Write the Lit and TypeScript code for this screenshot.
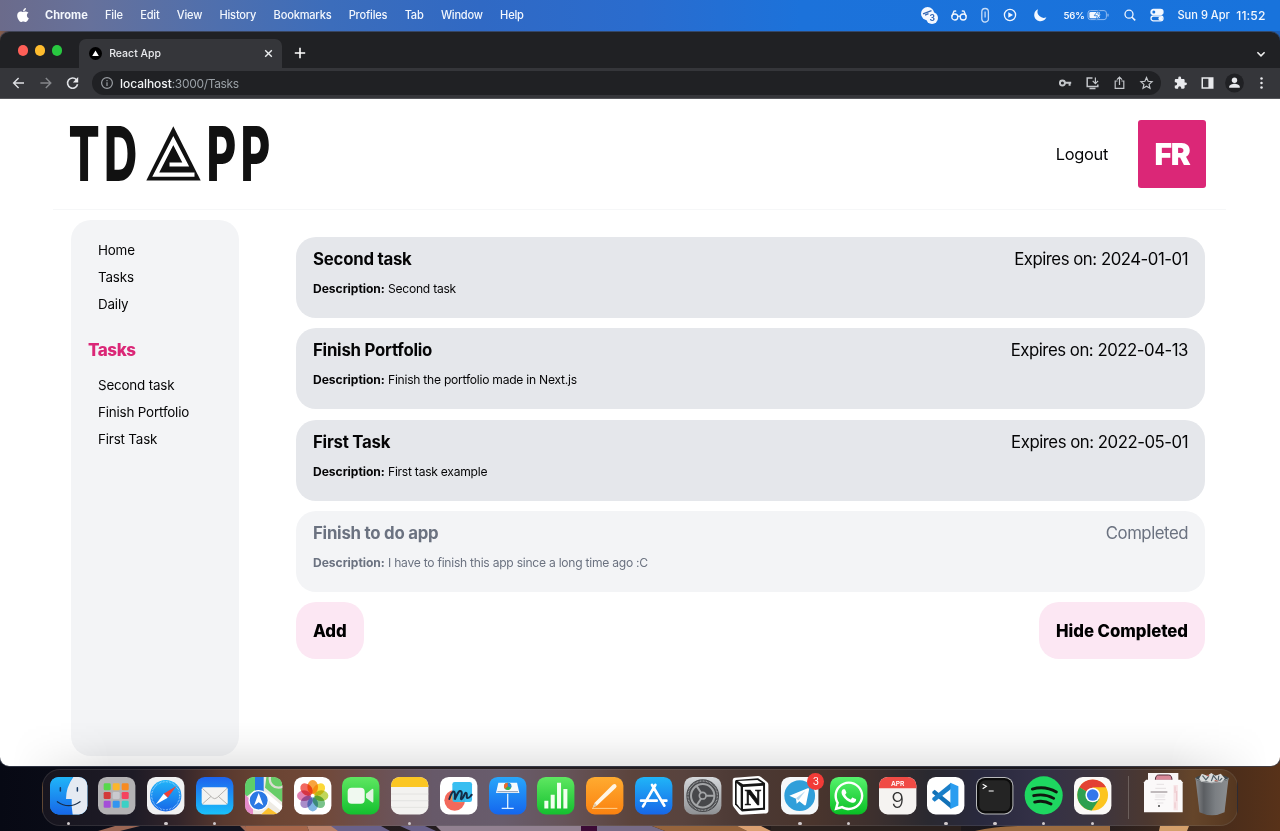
import { LitElement, html, css, svg } from "lit";
import { customElement } from "lit/decorators.js";

const tile = (fill: string) => svg`<rect width="112" height="112" rx="26" fill=${fill}/>`;

@customElement("menu-bar")
class MenuBar extends LitElement {
  static styles = css`
    :host { display: flex; align-items: center; height: 31px; color: #f3f7fd; font-size: 11.05px; letter-spacing: -.07px; font-weight: 500;
      background: linear-gradient(90deg, #6b6b8b 0, #66719b 90px, #4e6fae 220px, #3c6dbb 330px, #3069c4 480px, #2a6cce 640px, #1c72da 800px, #1873dc 100%); }
    .apple { width: 12px; height: 14px; margin: 0 16.5px 2px 16.5px; flex: none; fill: #fff; }
    .menus { display: flex; gap: 17.3px; margin-top: -1px; white-space: nowrap; letter-spacing: -.18px; }
    .name { font-weight: 700; letter-spacing: 0; }
    .status { display: flex; align-items: center; margin: -1px 0 0 auto; padding-right: 14.5px; white-space: nowrap; }
    .ic { width: 18px; height: 18px; flex: none; fill: none; stroke: #f1f6fe; stroke-width: 1.3; overflow: visible; }
    .solid { fill: #f4f8ff; stroke: none; }
    .glasses { margin-left: 12.5px; } .clip { margin-left: 8px; opacity: .8; } .play { margin-left: 7px; } .moon { margin-left: 12px; }
    .pct { font-size: 9.5px; font-weight: 600; letter-spacing: -.1px; margin-left: 14px; width: 24px; }
    .bat { width: 22px; }
    .search { margin-left: 12px; } .cc { margin-left: 9px; }
    .date { margin-left: 11px; font-size: 11.1px; letter-spacing: 0; }
    .time { margin-left: 6.5px; font-size: 12.1px; letter-spacing: .1px; }
  `;
  render() {
    return html`
      <svg class="apple" viewBox="0 30 384 452"><path d="M318.7 268.7c-.2-36.7 16.4-64.4 50-84.8-18.8-26.9-47.2-41.7-84.7-44.6-35.5-2.8-74.3 20.7-88.5 20.7-15 0-49.4-19.7-76.4-19.7C63.3 141.2 4 184.8 4 273.5q0 39.3 14.4 81.2c12.8 36.7 59 126.7 107.2 125.2 25.2-.6 43-17.9 75.8-17.9 31.8 0 48.3 17.9 76.4 17.9 48.6-.7 90.4-82.5 102.6-119.3-65.2-30.7-61.7-90-61.7-91.9zm-56.6-164.2c27.3-32.4 24.8-61.9 24-72.5-24.1 1.4-52 16.4-67.9 34.9-17.5 19.8-27.8 44.3-25.6 71.9 26.1 2 49.9-11.4 69.5-34.3z"/></svg>
      <div class="menus"><span class="name">Chrome</span>${["File", "Edit", "View", "History", "Bookmarks", "Profiles", "Tab", "Window", "Help"].map((m) => html`<span>${m}</span>`)}</div>
      <div class="status">
        <svg class="ic" viewBox="0 0 18 18"><g class="solid"><circle cx="7.6" cy="7.6" r="6.6"/><circle cx="12" cy="12" r="6"/></g><path d="M3 7.8 11.5 4.6M5 9.2 8.5 7.6" stroke="#3467b4"/><text x="9.5" y="15.2" font-size="8.5" font-weight="700" fill="#2f67b8" stroke="none">3</text></svg>
        <svg class="ic glasses" viewBox="0 0 18 18"><circle cx="4.8" cy="11" r="3"/><circle cx="13.2" cy="11" r="3"/><path d="M7.8 10.6Q9 9.6 10.2 10.6M1.8 10.6 4 5.2 6.2 5M16.2 10.6 14 5.2 11.8 5"/></svg>
        <svg class="ic clip" viewBox="0 0 18 18"><path d="M5.8 13.2V5.8a3.3 3.3 0 0 1 6.6 0v6.4a3.3 3.3 0 0 1-6.6 1M9.1 5.5v6"/></svg>
        <svg class="ic play" viewBox="0 0 18 18"><circle cx="9" cy="9" r="5.6"/><path class="solid" d="M7.3 6.2v5.6L12 9z"/></svg>
        <svg class="ic moon" viewBox="0 0 18 18"><path class="solid" d="M7 3.2A6.3 6.3 0 1 0 15.4 11.2 6.2 6.2 0 0 1 7 3.2z"/></svg>
        <span class="pct">56%</span>
        <svg class="ic bat" viewBox="0 0 22 18"><rect x="1" y="4.6" width="18.4" height="9" rx="2.4" stroke="#8fb9f0" stroke-width="1"/><rect class="solid" x="2.4" y="6" width="10.5" height="6.2" rx="1.2"/><path d="M21 7.8v2.6" stroke="#8fb9f0"/><path d="M12.2 3.2 7.2 9.7h3.2l-1.6 5.2 5.4-6.8h-3.4z" fill="#fff" stroke="#1873dc" stroke-width=".8"/></svg>
        <svg class="ic search" viewBox="0 0 18 18"><circle cx="8" cy="8.2" r="4"/><path d="m11 11.2 3.2 3.2" stroke-width="1.6"/></svg>
        <svg class="ic cc" viewBox="0 0 18 18"><rect x="3" y="3.4" width="12" height="5" rx="2.5" fill="#f4f8ff"/><rect x="3" y="10" width="12" height="4.8" rx="2.4"/><circle cx="5.8" cy="5.9" r="1.5" fill="#1873dc" stroke="none"/><circle class="solid" cx="12.4" cy="12.4" r="2"/></svg>
        <span class="date">Sun 9 Apr</span><span class="time">11:52</span>
      </div>`;
  }
}

@customElement("browser-chrome")
class BrowserChrome extends LitElement {
  static styles = css`
    :host { display: block; color: #e9eaed; }
    .tabs { display: flex; align-items: flex-end; height: 36px; background: #202124; }
    .lights { display: flex; gap: 6.6px; padding: 0 16.5px 12.5px 17.5px; }
    .dot { width: 10.5px; height: 10.5px; border-radius: 50%; }
    .red { background: #fe5f57; } .yel { background: #febc2e; } .grn { background: #28c840; }
    .tab { display: flex; align-items: center; box-sizing: border-box; width: 203px; height: 29px; padding: 0 8px 0 10.5px; border-radius: 7px 7px 0 0; background: #35363a; font-size: 10.5px; font-weight: 500; }
    .fav { width: 13px; height: 13px; margin-right: 7px; }
    .close { width: 11px; height: 11px; margin-left: auto; stroke: #eceef0; stroke-width: 1.4; fill: none; }
    .plus { width: 12px; height: 12px; margin: 0 0 9px 12.5px; stroke: #fff; stroke-width: 1.6; }
    .chev { width: 10px; height: 10px; margin: 0 14px 9.5px auto; stroke: #eee; stroke-width: 1.6; fill: none; }
    .bar { display: flex; align-items: center; box-sizing: border-box; height: 31px; padding: 0 5.5px 0 5px; background: #35363a; border-bottom: 1px solid #55565a; }
    .i { width: 27px; height: 18px; flex: none; fill: none; stroke: #dfe1e5; stroke-width: 1.4; overflow: visible; }
    .dim { stroke: #85878b; }
    .omni { display: flex; align-items: center; flex: 1; height: 24px; margin: 0 6px 0 6px; border-radius: 12px; background: #202124; font-size: 12px; letter-spacing: -.33px; color: #9aa0a6; }
    .info { width: 14px; height: 14px; margin: 0 6px 0 8px; fill: none; stroke: #9b9fa4; stroke-width: 1.2; }
    .host { color: #f1f3f4; font-weight: 500; letter-spacing: -.05px; }
    .small { stroke: #c3c6ca; stroke-width: 1.2; }
    .end { display: flex; margin: 0 .8px 0 auto; }
    .f { fill: #e9eaed; stroke: none; }
  `;
  render() {
    return html`
      <div class="tabs">
        <div class="lights"><i class="dot red"></i><i class="dot yel"></i><i class="dot grn"></i></div>
        <div class="tab"><svg class="fav" viewBox="0 0 13 13"><circle cx="6.5" cy="6.5" r="6.5" fill="#000"/><path d="M6.5 3.4 9.8 9H3.2z" fill="#fff"/></svg>React App<svg class="close" viewBox="0 0 11 11"><path d="m2.2 2.2 6.6 6.6m0-6.6L2.2 8.8"/></svg></div>
        <svg class="plus" viewBox="0 0 12 12"><path d="M6 .8v10.4M.8 6h10.4"/></svg>
        <svg class="chev" viewBox="0 0 10 10"><path d="m1.4 3.2 3.6 3.6 3.6-3.6"/></svg>
      </div>
      <div class="bar">
        <svg class="i" viewBox="0 0 27 18"><path d="M19 9H8.6m5-5-5 5 5 5"/></svg>
        <svg class="i dim" viewBox="0 0 27 18"><path d="M8.4 9h10.4m-5-5 5 5-5 5"/></svg>
        <svg class="i" viewBox="0 0 27 18"><path d="M17.4 5.6A5.1 5.1 0 1 0 18.6 10.3" stroke-width="1.6"/><path class="f" d="M19.2 3v5.4h-5.4z"/></svg>
        <div class="omni">
          <svg class="info" viewBox="0 0 14 14"><circle cx="7" cy="7" r="5.4"/><path d="M7 6.3v3.6M7 3.9v1.3"/></svg><span><span class="host">localhost</span>:3000/Tasks</span>
          <div class="end">
            <svg class="i small" viewBox="0 0 27 18"><circle cx="10.4" cy="9" r="2.5" stroke-width="1.9"/><path d="M13 8.8h6.2M17.6 9v2.8" stroke-width="2"/></svg>
            <svg class="i small" viewBox="0 0 27 18"><path d="M13.5 4H8.2v8.6h10.6v-2.2M10.5 14.4h6" stroke-width="1.5"/><path d="M16.4 3.4v6m-2.7-2.6 2.7 2.8 2.7-2.8"/></svg>
            <svg class="i small" viewBox="0 0 27 18"><path d="M11.6 7H9.2v7.4h8.6V7h-2.4M13.5 11V3.2m-2.6 2.4 2.6-2.6 2.6 2.6"/></svg>
            <svg class="i small" viewBox="0 0 27 18"><path d="m13.5 3.6 1.6 3.7 4 .4-3 2.7.9 3.9-3.5-2.1-3.5 2.1.9-3.9-3-2.7 4-.4z"/></svg>
          </div>
        </div>
        <svg class="i" viewBox="0 0 27 18"><path class="f" transform="translate(6.6 2) scale(.58)" d="M20.5 11H19V7c0-1.1-.9-2-2-2h-4V3.5a2.5 2.5 0 0 0-5 0V5H4c-1.1 0-1.99.9-1.99 2v3.8H3.5a2.7 2.7 0 0 1 0 5.4H2V20c0 1.1.9 2 2 2h3.8v-1.5a2.7 2.7 0 0 1 5.4 0V22H17c1.1 0 2-.9 2-2v-4h1.5a2.5 2.5 0 0 0 0-5z"/></svg>
        <svg class="i" viewBox="0 0 27 18"><path class="f" fill-rule="evenodd" d="M7.5 3.2h12v11.6h-12zM9 4.7v8.6h5.4V4.7z"/></svg>
        <svg class="i" viewBox="0 0 27 18"><circle cx="13.5" cy="9" r="9.4" fill="#202124" stroke="none"/><circle class="f" cx="13.5" cy="6.3" r="2.7"/><path class="f" d="M8.2 13.8v-1c0-2 3.4-3 5.3-3s5.3 1 5.3 3v1z"/></svg>
        <svg class="i" viewBox="0 0 27 18"><g class="f"><circle cx="13.5" cy="4.6" r="1.25"/><circle cx="13.5" cy="9" r="1.25"/><circle cx="13.5" cy="13.4" r="1.25"/></g></svg>
      </div>`;
  }
}

interface Task { title: string; text: string; status: string; done?: boolean }

const tasks: Task[] = [
  { title: "Second task", text: "Second task", status: "Expires on: 2024-01-01" },
  { title: "Finish Portfolio", text: "Finish the portfolio made in Next.js", status: "Expires on: 2022-04-13" },
  { title: "First Task", text: "First task example", status: "Expires on: 2022-05-01" },
  { title: "Finish to do app", text: "I have to finish this app since a long time ago :C", status: "Completed", done: true },
];

@customElement("tasks-page")
class TasksPage extends LitElement {
  static styles = css`
    :host { display: flex; flex-direction: column; flex: 1; min-height: 0; color: #050506; background: #fff; }
    header { display: flex; align-items: center; box-sizing: border-box; height: 110.8px; margin: 0 54px 0 53px; padding-right: 20px; border-bottom: 1px solid #f6f7f8; }
    .logo { width: 204px; height: 60px; margin-left: 15px; fill: #111; overflow: visible; font-family: Inter, sans-serif; font-weight: 800; letter-spacing: 7px; }
    .logout { margin-left: auto; font-size: 16.4px; letter-spacing: -.3px; }
    .avatar { display: grid; place-items: center; width: 68px; height: 68px; margin-left: 30px; border-radius: 3px; background: #db2777; color: #fff; font-size: 30px; font-weight: 900; letter-spacing: -1.2px; }
    .body { display: flex; flex: 1; min-height: 0; padding: 10px 75px 10px 71px; }
    aside { box-sizing: border-box; width: 168px; padding: 17px 17px; border-radius: 20px; background: #f3f4f6; }
    .link { padding-left: 10px; height: 27.1px; line-height: 27.8px; font-size: 13.4px; letter-spacing: -.18px; }
    h2 { margin: 16px 0 7px; height: 31px; line-height: 33px; font-size: 17px; font-weight: 800; letter-spacing: -.45px; color: #db2777; }
    main { flex: 1; padding: 17px 0 0 57px; }
    .card { box-sizing: border-box; height: 81px; margin-bottom: 10.4px; padding: 9.2px 17px; border-radius: 20px; background: #e5e7eb; }
    .done { background: #f3f4f6; color: #6b7280; }
    .top { display: flex; justify-content: space-between; line-height: 26px; font-size: 16.8px; letter-spacing: -.48px; }
    .title { font-weight: 700; letter-spacing: -.24px; }
    .desc { margin-top: 7px; line-height: 20px; font-size: 12.1px; letter-spacing: -.25px; }
    .desc b { letter-spacing: -.05px; }
    .actions { display: flex; justify-content: space-between; }
    .btn { height: 57px; padding: 0 17px; border: 0; border-radius: 20px; background: #fce7f3; color: #000; font: 800 16.8px Inter, sans-serif; letter-spacing: -.06px; }
  `;
  render() {
    return html`
      <header>
        <svg class="logo" viewBox="0 0 204 60" font-size="76">
          <text x=".5" y="56.500" textLength="73" lengthAdjust="spacingAndGlyphs">TD</text>
          <text x="138.500" y="56.500" textLength="68" lengthAdjust="spacingAndGlyphs">PP</text>
          <path d="M105.300 2.200 132.700 56.500H78.300z"/>
          <path d="M126.500 50.700H87.700L105.300 16.600 117.700 40.500H101.500" fill="none" stroke="#fff" stroke-width="4.200"/>
        </svg>
        <span class="logout">Logout</span>
        <div class="avatar">FR</div>
      </header>
      <div class="body">
        <aside>
          ${["Home", "Tasks", "Daily"].map((l) => html`<div class="link">${l}</div>`)}
          <h2>Tasks</h2>
          ${tasks.filter((t) => !t.done).map((t) => html`<div class="link">${t.title}</div>`)}
        </aside>
        <main>
          ${tasks.map((t) => html`<div class="card ${t.done ? "done" : ""}"><div class="top"><span class="title">${t.title}</span><span>${t.status}</span></div><div class="desc"><b>Description:</b> ${t.text}</div></div>`)}
          <div class="actions"><button class="btn">Add</button><button class="btn">Hide Completed</button></div>
        </main>
      </div>`;
  }
}

const petals = ["#f7941d", "#fcd116", "#b5cf3a", "#62b875", "#69a8dd", "#9a79c0", "#dc6ba4", "#f04e45"];

const apps = [
  { run: true, art: svg`${tile("#1d9bf5")}<path d="M0 60V26A26 26 0 0 1 26 0h40Q48 32 47 64h19q-2 26 2 48H26A26 26 0 0 1 0 86z" fill="url(#blue)"/><path d="M70 0h16a26 26 0 0 1 26 26v60a26 26 0 0 1-26 26H68q-4-22-3-46H48Q48 30 70 0z" fill="#e5eaf2"/><path d="M31 32v10M82 32v10" stroke="#173a66" stroke-width="4.5" stroke-linecap="round"/><path d="M22 74q34 24 68 0" stroke="#172c48" stroke-width="3.5" fill="none" stroke-linecap="round"/>` },
  { run: false, art: svg`${tile("#b3b2b4")}${["#57d84b", "#fbb62b", "#f78a22", "#d23a3a", "#c9c9ce", "#f4435f", "#a44fd8", "#3295f0", "#3bd0c5"].map((c, i) => svg`<rect x=${17 + (i % 3) * 27} y=${19 + Math.floor(i / 3) * 26} width="21" height="21" rx="4" fill=${c}/>`)}` },
  { run: true, art: svg`${tile("#f1f1f2")}<circle cx="56" cy="56" r="47" fill="url(#blue)"/><circle cx="56" cy="56" r="42" fill="none" stroke="#b9e0ff" stroke-width="4" stroke-dasharray="1.5 3"/><path d="M88 27 50 50 62 62z" fill="#ee4238"/><path d="M26 82 50 50 62 62z" fill="#fff"/>` },
  { run: true, art: svg`${tile("url(#mail)")}<rect x="17" y="31" width="78" height="52" rx="6" fill="#f4f3f1"/><path d="m19 34 30 28q7 6 14 0l30-28M19 81l26-23M93 81 67 58" fill="none" stroke="#a9a7a3" stroke-width="2.5"/>` },
  { run: false, art: svg`<g clip-path="url(#tile)">${tile("#eeebe4")}<path d="M0 0h30v40L0 62z" fill="#5fcf69"/><path d="M64 0h48v76L60 32z" fill="#67cd68"/><circle cx="100" cy="6" r="26" fill="none" stroke="#d9ddd2" stroke-width="7"/><path d="M112 96 58 50" stroke="#fff" stroke-width="14"/><path d="M0 52 24 78v34H0z" fill="#e58bc9"/><path d="M48 112 70 92l30 20z" fill="#fbc02e"/><path d="M30 0h26v48H30z" fill="#2778e5"/></g><circle cx="41" cy="70" r="29" fill="#2a78e4" stroke="#fff" stroke-width="4"/><path d="m41 48 14 37-14-9-14 9z" fill="#fff"/>` },
  { run: false, art: svg`${tile("#fff")}${petals.map((c, i) => svg`<ellipse class="petal" cx="56" cy="30" rx="16" ry="21" fill=${c} opacity=".85" transform="rotate(${i * 45} 56 56)"/>`)}` },
  { run: false, art: svg`${tile("url(#green)")}<rect x="17" y="32" width="51" height="48" rx="12" fill="#f0f9f0"/><path d="M72 50 90 36q4-2 4 3v34q0 5-4 3L72 62z" fill="#dff3df"/>` },
  { run: true, art: svg`${tile("#f3f2f0")}<path d="M0 30v-4A26 26 0 0 1 26 0h60a26 26 0 0 1 26 26v4z" fill="#fbc623"/><path d="M0 51h112M0 71h112M0 91h112" stroke="#dddcda" stroke-width="2"/>` },
  { run: false, art: svg`${tile("#fff")}<circle cx="44" cy="70" r="31" fill="#f2695c"/><path d="M38 38q30-4 34 36-22 8-44-8z" fill="#f7934a"/><rect x="37" y="15" width="59" height="60" rx="7" fill="#27b8f0" opacity=".92"/><path d="M28 66C38 36 48 36 44 68c8-18 14-32 20-24 5 7-6 25 1 22 8-4 8-22 14-18 4 4-2 16 4 15 7 0 8-6 12-10" fill="none" stroke="#142c48" stroke-width="6" stroke-linecap="round"/>` },
  { run: false, art: svg`${tile("url(#keynote)")}<path d="M56 50v44M38 94h36" stroke="#dff0ff" stroke-width="4"/><path d="M28 17h56l7 31H21z" fill="#f5f9fd"/><path d="M25 44h62" stroke="#8798ae" stroke-width="3"/><circle cx="56" cy="28" r="11" fill="#38b04a"/><path d="M56 28V17a11 11 0 0 1 10 15z" fill="#2a83e6"/><path d="M56 28 48 36A11 11 0 0 1 56 17z" fill="#f4642d"/>` },
  { run: false, art: svg`${tile("url(#green)")}<path d="M22 71h12v23H22zM41 53h12v41H41zM60 17h12v77H60zM79 36h12v58H79z" fill="#f2fff0"/>` },
  { run: false, art: svg`${tile("url(#orange)")}<path d="M18 94h76" stroke="#ffd08d" stroke-width="3"/><path d="m20 92 6-15 54-54q6-4 10 0 4 5-1 10L33 85z" fill="#fff5e4"/><path d="m20 92 6-15 7 8z" fill="#dec6a4"/>` },
  { run: false, art: svg`${tile("url(#blue)")}<path d="M51 24 76 66l12 20M61 24 32 74M18 71h47M80 71h14M29 80l-5 8" stroke="#fff" stroke-width="8" stroke-linecap="round" fill="none"/>` },
  { run: false, art: svg`${tile("url(#grey)")}<circle cx="56" cy="56" r="49" fill="#47484b"/><circle cx="56" cy="56" r="44" fill="none" stroke="#a4a6a8" stroke-width="4" stroke-dasharray="2.5 2"/><circle cx="56" cy="56" r="35" fill="none" stroke="#a3a5a7" stroke-width="6"/><circle cx="56" cy="56" r="10" fill="none" stroke="#a3a5a7" stroke-width="5"/><path d="M66 56h26M51 47 37 26M51 65 37 86" stroke="#a3a5a7" stroke-width="6"/>` },
  { run: false, art: svg`<path d="M8 2 78-3q5 0 10 4l17 14q4 3 4 8v77q0 8-8 9l-73 4q-5 0-8-4L5 90Q2 86 2 81V10q0-7 6-8z" fill="#fff"/><path d="M12 9 78 4l21 14v80l-69 5L9 82V15q0-5 3-6z" fill="#151515"/><path d="M17 12 76 9l14 9-57 4z" fill="#fff"/><path d="M14 18 26 29v66L14 80z" fill="#fff"/><path d="M33 30 93 26v66l-60 4z" fill="#fff"/><text x="38" y="84" font-family="Liberation Serif, serif" font-size="66" font-weight="700" fill="#111" stroke="#111" stroke-width="2" textLength="49" lengthAdjust="spacingAndGlyphs">N</text>` },
  { run: true, badge: true, art: svg`${tile("#f5f8fa")}<circle cx="56" cy="56" r="46" fill="#309fda"/><path d="M25 56 80 34q5-2 4 4l-9 44q-2 5-6 2L55 73l-8 7-2-15z" fill="#fff"/><path d="m45 64 28-22-21 28" fill="#b7d9ee"/>` },
  { run: true, art: svg`${tile("url(#whats)")}<path transform="translate(13 7) scale(.194)" fill="#fff" d="M380.9 97.1C339 55.1 283.2 32 223.9 32c-122.4 0-222 99.6-222 222 0 39.1 10.2 77.3 29.6 111L0 480l117.7-30.9c32.4 17.7 68.9 27 106.1 27h.1c122.3 0 224.1-99.6 224.1-222 0-59.3-25.2-115-67.1-157zm-157 341.6c-33.2 0-65.7-8.9-94-25.7l-6.7-4-69.8 18.3L72 359.2l-4.4-7c-18.5-29.4-28.2-63.3-28.2-98.2 0-101.7 82.8-184.5 184.6-184.5 49.3 0 95.6 19.2 130.4 54.1 34.8 34.9 56.2 81.2 56.1 130.5 0 101.8-84.9 184.6-186.6 184.6zm101.2-138.2c-5.5-2.8-32.8-16.2-37.9-18-5.1-1.9-8.8-2.8-12.5 2.8-3.7 5.6-14.3 18-17.6 21.8-3.2 3.7-6.5 4.2-12 1.4-32.6-16.3-54-29.1-75.5-66-5.7-9.8 5.7-9.1 16.3-30.3 1.8-3.7.9-6.9-.5-9.7-1.4-2.8-12.5-30.1-17.1-41.2-4.5-10.8-9.1-9.3-12.5-9.5-3.2-.2-6.9-.2-10.6-.2-3.7 0-9.7 1.4-14.8 6.9-5.1 5.6-19.4 19-19.4 46.3 0 27.3 19.9 53.7 22.6 57.4 2.8 3.7 39.1 59.7 94.8 83.8 35.2 15.2 49 16.5 66.6 13.9 10.7-1.6 32.8-13.4 37.4-26.4 4.6-13 4.6-24.1 3.2-26.4-1.3-2.5-5-3.9-10.5-6.6z"/>` },
  { run: false, art: svg`${tile("#f5f3f1")}<path d="M0 34v-8A26 26 0 0 1 26 0h60a26 26 0 0 1 26 26v8z" fill="#f04b45"/><text x="56" y="26" text-anchor="middle" font-size="20" font-weight="600" fill="#fff">APR</text><text x="56" y="93" text-anchor="middle" font-size="64" font-weight="300" fill="#333">9</text>` },
  { run: true, art: svg`${tile("#fff")}<path d="M16 44 23 38 72 78v17L16 49z" fill="#1271b7"/><path d="M16 68 23 74 72 36V17L16 63z" fill="#1a7fc9"/><path d="M70 17 94 28v57L70 96z" fill="#2a9df0"/>` },
  { run: true, art: svg`${tile("#b9babb")}<rect x="3" y="3" width="106" height="106" rx="24" fill="#0b0b0b"/><rect x="10" y="10" width="92" height="92" rx="17" fill="#242424"/><path d="m20 22 11 6-11 7M38 42h15" fill="none" stroke="#fff" stroke-width="3.5"/>` },
  { run: true, art: svg`<circle cx="56" cy="55" r="57" fill="#1ed760"/><path d="M22 36q38-11 72 9M26 56q32-8 60 8M29 75q27-7 49 6" fill="none" stroke="#10180f" stroke-width="8.5" stroke-linecap="round"/>` },
  { run: true, art: svg`${tile("#fbf9f7")}<circle cx="56" cy="54" r="46" fill="#fcc41f"/><path d="M56 54 16 31a46 46 0 0 1 80 0H56z" fill="#e34133"/><path d="M16 31A46 46 0 0 0 53 100L76 66 56 54z" fill="#2ea04f"/><circle cx="56" cy="54" r="22" fill="#fff"/><circle cx="56" cy="54" r="17.5" fill="#3577ea"/>` },
];

@customElement("app-dock")
class AppDock extends LitElement {
  static styles = css`
    :host { display: flex; align-items: flex-start; box-sizing: border-box; width: 1196px; height: 57px; padding: 7px 0 0 1px; border: 1px solid #8883; border-radius: 18px; font-family: Inter, sans-serif;
      background: linear-gradient(90deg, #17151f 0, #1e1b26 90px, #33252a 135px, #59392f 180px, #6a4433 225px, #714837 275px, #6d5050 330px, #675969 390px, #685c6c 460px, #66545a 520px, #5c443c 590px, #58433e 640px, #4b3934 700px, #4a352d 770px, #3d302e 830px, #2a2930 885px, #29293e 940px, #333046 990px, #3c3540 1050px, #4c3830 1105px, #65452a 1150px, #553720 100%); }
    .slot { position: relative; width: 48.77px; flex: none; display: flex; flex-direction: column; align-items: center; }
    .icon { width: 37.4px; height: 37.4px; overflow: visible; }
    .petal { mix-blend-mode: multiply; }
    .run { width: 3.5px; height: 3.5px; margin-top: 7.4px; border-radius: 50%; background: #cfc9cb; }
    .badge { position: absolute; top: -4px; right: 0; width: 17px; height: 17px; border-radius: 50%; background: #f23b37; color: #fff; font-size: 10px; line-height: 17px; text-align: center; }
    .rule { width: 1px; height: 43px; margin: -1px 15px 0 11px; background: #8c837d88; flex: none; }
    .files { width: 39px; height: 40px; margin: -4px 0 0 0; overflow: visible; }
    .trash { width: 34px; height: 43px; margin: -4px 0 0 12px; overflow: visible; }
    .defs { position: absolute; width: 0; height: 0; }
  `;
  grad(id: string, a: string, b: string) {
    return svg`<linearGradient id=${id} x2="0" y2="1"><stop stop-color=${a}/><stop offset="1" stop-color=${b}/></linearGradient>`;
  }
  render() {
    const defs = [["blue", "#20b5f8", "#1767e8"], ["mail", "#1d63ee", "#1ac0fa"], ["green", "#5ee761", "#14c02f"], ["keynote", "#28a6fa", "#1466ee"], ["orange", "#ffab30", "#fb8210"], ["grey", "#d5d8db", "#8f9194"], ["whats", "#57f36d", "#08bf24"]];
    return html`
      <svg class="defs"><defs>${defs.map((d) => this.grad(d[0], d[1], d[2]))}<clipPath id="tile"><rect width="112" height="112" rx="26"/></clipPath></defs></svg>
      ${apps.map((a) => html`<div class="slot"><svg class="icon" viewBox="0 0 112 112">${a.art}</svg>${a.badge ? html`<span class="badge">3</span>` : ""}${a.run ? html`<i class="run"></i>` : ""}</div>`)}
      <i class="rule"></i>
      <svg class="files" viewBox="0 0 117 120"><rect x="12" y="0" width="91" height="50" fill="#f8f5f5"/><path d="M34 22q0-16 10-16h30q10 0 10 16z" fill="#d98999" stroke="#512f3b" stroke-width="3"/><path d="M0 28 6 20h104l6 8v90H0z" fill="#fbf9f9"/><path d="M38 34h22M34 46h32M34 66h30M34 72h28M32 80h32M40 90h18" stroke="#cfc9cc" stroke-width="1.5"/><path d="M20 57h50" stroke="#6c6367" stroke-width="2.5"/><circle cx="45" cy="99" r="3" fill="#444"/><path d="M95 36v76" stroke="#f7e3e5" stroke-width="13"/><path d="M93 40v20m5-6v30m-5 4v18" stroke="#e8b9c0" stroke-width="2"/></svg>
      <svg class="trash" viewBox="0 0 100 127"><defs><linearGradient id="can"><stop stop-color="#88898b"/><stop offset=".25" stop-color="#5b5e62"/><stop offset=".6" stop-color="#7b7f83"/><stop offset="1" stop-color="#8c8e90"/></linearGradient></defs><path d="M1 14h98L87 116q-37 18-74 0z" fill="url(#can)"/><ellipse cx="50" cy="16" rx="49" ry="11" fill="#3f474b"/><path d="m12 16 8-14 16 6L48 0l12 8 16-6 12 14-10 12-16-4-14 5-14-5-16 2z" fill="#d9dbda"/><path d="m22 8 10 12 8-10m8 14 6-16 10 12m6-12-2 15m12-8-8 8" fill="none" stroke="#4d5c63" stroke-width="3.5"/><path d="m34 6 8 3m16 13 10 2" stroke="#bb5b4b" stroke-width="3"/><path d="M1 17q49 24 98 0" fill="none" stroke="#b9bdbf" stroke-width="2"/></svg>`;
  }
}

@customElement("app-root")
class AppRoot extends LitElement {
  static styles = css`
    :host { display: block; position: relative; width: 1280px; height: 831px; overflow: hidden; font-family: Inter, "Liberation Sans", sans-serif;
      background: linear-gradient(90deg, #070914 0, #10101b 180px, #241c1e 330px, #251e21 600px, #201817 900px, #171721 1050px, #3b271c 1170px, #583219 1280px); }
    .floor { position: absolute; left: 0; bottom: 0; width: 1280px; height: 66px; }
    .window { position: relative; display: flex; flex-direction: column; height: 734px; margin-top: 1px; border-radius: 9px; overflow: hidden; box-shadow: 0 0 0 .7px #3b4252; }
    .backing { position: absolute; top: 31px; width: 1280px; height: 16px; background: linear-gradient(90deg, #875e4c 0, #4c4a60 12px, #2456a5 40%, #1b5fb8); }
    .shade { position: absolute; left: 0; bottom: 0; width: 1280px; height: 44px; pointer-events: none; background: linear-gradient(#0000, #00000006 40%, #00000018);
      -webkit-mask-image: linear-gradient(90deg, transparent 12px, #000 110px, #000 1170px, transparent 1268px); mask-image: linear-gradient(90deg, transparent 12px, #000 110px, #000 1170px, transparent 1268px); }
    .dock { position: absolute; left: 42px; top: 769px; }
  `;
  render() {
    return html`
      <menu-bar></menu-bar>
      <div class="backing"></div>
      <div class="window"><browser-chrome></browser-chrome><tasks-page></tasks-page><div class="shade"></div></div>
      <svg class="floor" viewBox="0 765 1280 66"><path d="M98 831 115 826h130l4 5z" fill="#9a6654"/><path d="M120 831 140 826h100l5 5z" fill="#12131f"/><path d="M245 826h62l2 5h-62z" fill="#a6664a"/><path d="M307 826h70l4 5h-72z" fill="#b98068"/><path d="M331 826h50l9 5h-52zM400 826h25l11 5h-25z" fill="#69618a"/><path d="M436 826h145v5H441z" fill="#928191"/><path d="M581 826h16v5h-16z" fill="#3c0b36"/><path d="M597 826h55l13 5h-68z" fill="#776b86"/><path d="M652 826h85l10 5h-82z" fill="#96643c"/><path d="M737 826h24l10 5h-24z" fill="#dba071"/><path d="M771 826h190v5H771z" fill="#2b211e"/><path d="M975 831q25-6 60-5h75v5z" fill="#9b6b40"/><path d="M1160 826h29l-2 5h-28z" fill="#d4a06b"/></svg>
      <app-dock class="dock"></app-dock>`;
  }
}
